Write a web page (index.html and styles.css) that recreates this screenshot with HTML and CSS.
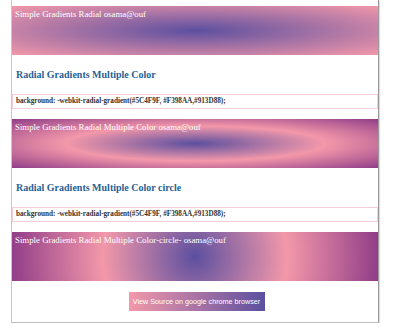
FILE: index.html
```html
<!DOCTYPE html>
<html lang="en">
<head>
    <meta charset="UTF-8">
    <meta name="viewport" content="width=device-width, initial-scale=1.0">
    <title>Radial Gradients</title>
    <link rel="stylesheet" href="styles.css">
</head>
<body>
    <div class="post">
        <div class="grad grad-simple">Simple Gradients Radial osama@ouf</div>

        <h3 class="title">Radial Gradients Multiple Color</h3>
        <div class="code">background: -webkit-radial-gradient(#5C4F9F, #F398AA,#913D88);</div>

        <div class="grad grad-multi">Simple Gradients Radial Multiple Color osama@ouf</div>

        <h3 class="title">Radial Gradients Multiple Color circle</h3>
        <div class="code">background: -webkit-radial-gradient(#5C4F9F, #F398AA,#913D88);</div>

        <div class="grad grad-circle">Simple Gradients Radial Multiple Color-circle- osama@ouf</div>

        <div class="actions">
            <a class="btn" href="#">View Source on google chrome browser</a>
        </div>
    </div>
</body>
</html>
```

FILE: styles.css
```css
body {
    margin: 0;
    background: #fff;
    font-family: "Liberation Serif", "Times New Roman", Times, serif;
}

.post {
    width: 366px;
    margin-left: 11px;
    padding-top: 6px;
    border-left: 1px solid #c8c8c8;
    border-right: 1px solid #9a9a9a;
    border-bottom: 1px solid #bdbdbd;
    box-shadow: 1px 1px 1px #dcdcdc;
}

.grad {
    height: 49px;
    box-sizing: border-box;
    padding: 3px 3px 0;
    color: #fff;
    font-size: 8.8px;
    line-height: 11px;
}

.grad-simple {
    background: radial-gradient(#5C4F9F, #F398AA);
}

.grad-multi {
    background: radial-gradient(#5C4F9F, #F398AA, #913D88);
}

.grad-circle {
    background: radial-gradient(circle, #5C4F9F, #F398AA, #913D88);
}

.title {
    margin: 0;
    height: 39px;
    padding: 13px 4px 0;
    box-sizing: border-box;
    color: #2b5f95;
    font-size: 10px;
    line-height: 13px;
    font-weight: bold;
}

.code {
    height: 15px;
    box-sizing: border-box;
    border: 1px solid #f7cdd6;
    padding: 0 3px;
    margin-bottom: 10px;
    color: #333;
    font-size: 7.2px;
    font-weight: bold;
    line-height: 13px;
}

.actions {
    display: flex;
    justify-content: center;
    padding: 11px 0;
}

.btn {
    display: block;
    margin-left: 3px;
    width: 136px;
    height: 19px;
    line-height: 19px;
    text-align: center;
    color: #fff;
    text-decoration: none;
    font-family: "Liberation Sans", Arial, sans-serif;
    font-size: 7.2px;
    background: linear-gradient(to right, #F398AA, #5C4F9F);
}
```
